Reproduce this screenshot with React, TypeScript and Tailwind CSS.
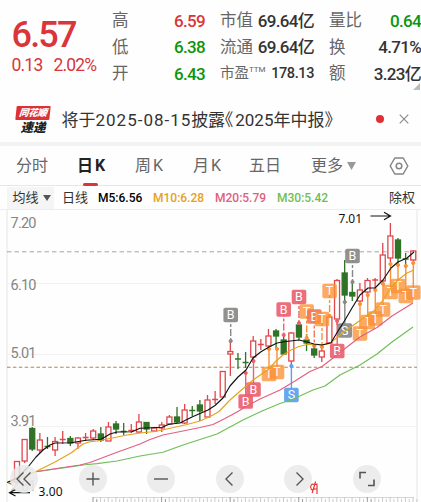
import { ReactNode } from "react";

const RED = "#e0474c";
const GREEN = "#2f7327";

// [high, bodyTop, bodyBottom, low, colour]
const candles: [number, number, number, number, string][] = [
    [461, 461.5, 482, 482, "r"],
    [439, 439.5, 461, 463, "r"],
    [427, 428.5, 449, 451, "g"],
    [433, 440, 450, 453, "r"],
    [437, 446, 447, 449, "g"],
    [437, 441.5, 450, 456, "r"],
    [431, 439, 440, 444, "r"],
    [436, 438.5, 443, 446, "g"],
    [437, 438, 443, 449, "r"],
    [433, 437, 438, 441, "r"],
    [429, 431, 438, 440, "r"],
    [427, 434, 440, 442, "g"],
    [422, 427, 441, 441, "r"],
    [421, 424, 429, 434, "g"],
    [423, 431, 432, 435, "g"],
    [424, 430, 431, 433, "r"],
    [414, 422, 432, 433, "r"],
    [422, 422.5, 429, 434, "g"],
    [427, 428, 431, 432, "r"],
    [422, 425, 428, 432, "r"],
    [415, 417, 424, 425, "r"],
    [407, 417, 422, 423, "g"],
    [404, 410, 423, 424, "r"],
    [406, 410, 411, 416, "g"],
    [400, 405, 411, 421, "g"],
    [395, 400, 417, 418, "r"],
    [391, 399, 400, 404, "r"],
    [371, 371.5, 397, 397, "r"],
    [341, 351.5, 354, 376, "r"],
    [353, 358, 360, 369, "g"],
    [352, 362, 363, 368, "g"],
    [336, 341, 357, 362, "r"],
    [339, 344, 345, 350, "r"],
    [329, 336, 346, 350, "r"],
    [329, 331, 336, 348, "g"],
    [335, 340, 354, 355, "g"],
    [332, 333, 361, 365, "r"],
    [321, 325, 337, 340, "g"],
    [334, 340, 343, 351, "g"],
    [345, 349, 355, 358, "g"],
    [347, 351, 357, 362, "r"],
    [316, 317, 343, 344, "r"],
    [279, 280.5, 319, 325, "r"],
    [260, 273, 295, 303, "g"],
    [282, 292.5, 296, 301, "g"],
    [283, 290, 301, 305, "r"],
    [278, 280.5, 292, 297, "r"],
    [278, 279, 281, 290, "r"],
    [243, 255, 281, 283, "r"],
    [223, 236, 258, 262, "r"],
    [238, 240, 258, 264, "g"],
    [253, 258.5, 259.5, 268, "g"],
    [250, 251, 260, 261, "r"],
];

const lines = [
    {
        color: "#6fbf56",
        points: "36,471.7 70,467 85,464.8 97,463.6 117,461 140,456 163,452.3 183,445 200,439.5 217,434 243,420 262,411 280,403.5 291,400 313,390 325,386 340,375 360,365 377,354 392,342 413,327",
    },
    {
        color: "#e0607f",
        points: "36,471.7 53,469 80,465 90,462.5 115,453 140,444 150,439.5 163,435 183,431 200,427.5 213,424.5 225,418.5 237,412 247,406 260,399 270,394.5 280,390 295,381 310,371.5 322,366.5 337,355 345,348.5 360,337 377,327.5 392,316 413,303",
    },
    {
        color: "#e5a21c",
        points: "8,482.5 36,471.5 55,462 71,453 83,444 90,441.7 97,441 110,438.5 127,435 140,433 155,431.5 167,429 187,424.5 200,421 213,415 219,411.5 230,400 238,393 253,380 269,369 276,361 283,355 291,350 299,346.5 307,344.5 314,344.5 322,345 330,343.5 337,337.5 345,331 360,320.5 375,310 383,300 391,288 398,280 407,273 414,270",
    },
    {
        color: "#111111",
        points: "7,482.5 17,478 22,473 28,467 36,457 43,450 50,445 55,443 71,442.7 86,440.3 101,439.3 105,437 110,434 117,432 132,431.7 140,428.2 162,427.2 169,424.2 180,423 192,417 200,413.5 208,410 215,405.5 223,398 230,386 238,377 246,370 253,358 261,351.7 269,347 277,343 284,341.7 299,340 307,342 314,344 322,345 331,342.7 338,331 345,320 352,308 360,295 368,288 375,288 383,280 391,268 398,262 407,258 414,252",
    },
];

// cx, cy, letter, fill, anchor y the stem points at
const badges: [number, number, string, string, number][] = [
    [230.7, 315, "B", "#888888", 341],
    [245.7, 401.5, "B", "#e9626f", 373],
    [253.5, 389.5, "B", "#e9626f", 361],
    [269, 374, "T", "#fb9135", 349],
    [277, 372, "T", "#fb9135", 349],
    [283.7, 309.5, "B", "#e9626f", 335],
    [291.4, 395, "S", "#5ba0ea", 366],
    [299, 297, "B", "#e9626f", 323],
    [306.7, 311.5, "T", "#fb9135", 338],
    [314.3, 316.5, "B", "#ee7a5c", 346],
    [322, 319, "T", "#fb9135", 347],
    [329.6, 291, "T", "#fb9135", 316],
    [337.2, 351, "B", "#e9626f", 321],
    [344.8, 330.5, "S", "#888888", 302],
    [352.5, 256, "B", "#888888", 282],
    [360, 333.5, "T", "#fb9135", 304],
    [367.7, 322, "T", "#fb9135", 295],
    [375.3, 318.5, "T", "#fb9135", 290],
    [383, 309.5, "T", "#fb9135", 284],
    [390.5, 292, "T", "#fb9135", 264],
    [398, 286, "T", "#fb9135", 265],
    [405.8, 296, "T", "#fb9135", 266],
    [413.3, 292.5, "T", "#fb9135", 263],
];

const ticks = Array.from({ length: 43 }, (_, i) => 93 + i * 7.62);

function Chart() {
    return (
        <svg width="421" height="292" viewBox="0 210 421 292" className="block">
            <path d="M7 210V502M417 210V502" stroke="#e6e6e6" fill="none" />
            <path d="M7 283.5H417M7 354.5H417M7 426.5H417" stroke="#f2f2f2" />
            <path d="M7 251.8H417" stroke="#a5a5a5" strokeDasharray="4.5 3" />
            <path d="M7 367.3H417" stroke="#bd8149" strokeDasharray="3.5 2.4" strokeWidth="1.1" />
            <path d="M93 497.5H414" stroke="#d5d5d5" />
            {ticks.map((x, i) => (
                <path key={i} d={`M${x} 497V502M${x + 3.8} 499V502`} stroke={i % 9 === 0 ? "#999" : "#ccc"} />
            ))}

            <g fontSize="14.5" fill="#858585" fontFamily="Roboto, 'Liberation Sans', sans-serif">
                <text x="10.5" y="227.5" textLength="26">7.20</text>
                <text x="10.5" y="289.5" textLength="26">6.10</text>
                <text x="10.5" y="357.5" textLength="26">5.01</text>
                <text x="10.5" y="426" textLength="26">3.91</text>
                <text x="10.5" y="491" textLength="26" fill="#bbb">2.81</text>
            </g>

            {candles.map(([high, top, bottom, low, c], i) => {
                const x = 17 + i * 7.62;
                const color = c === "r" ? RED : GREEN;
                const flat = bottom - top < 2.5;
                return (
                    <g key={i} stroke={color} strokeWidth="1.3">
                        <path d={`M${x} ${high}V${top}M${x} ${bottom}V${low}`} />
                        {flat ? (
                            <path d={`M${x} ${top}V${bottom}M${x - 3} ${(top + bottom) / 2}H${x + 3}`} />
                        ) : (
                            <rect x={x - 2.5} y={top} width="5" height={bottom - top} fill={c === "r" ? "#fff" : GREEN} />
                        )}
                    </g>
                );
            })}

            {badges.map(([x, y, , fill, to], i) => (
                <g key={i} stroke={fill} fill={fill}>
                    <path
                        d={`M${x} ${y}V${to}`}
                        strokeWidth="1.4"
                        strokeDasharray={to > y ? "7 2 3 2" : undefined}
                        fill="none"
                    />
                    <circle cx={x} cy={to} r="1.6" />
                </g>
            ))}

            {badges.map(([x, y, letter, fill], i) => (
                <g key={i}>
                    <rect x={x - 7.3} y={y - 7.3} width="14.6" height="14.6" rx="1.8" fill={fill} fillOpacity={letter === "T" ? 0.78 : 0.92} />
                    <text x={x} y={y + 4.4} textAnchor="middle" fontSize="12.5" fill="#fff" fontFamily="Roboto, sans-serif">
                        {letter}
                    </text>
                </g>
            ))}

            {lines.map((l) => (
                <polyline key={l.color} points={l.points} stroke={l.color} strokeWidth="1.15" fill="none" strokeLinejoin="round" />
            ))}

            <g fontFamily="'Noto Sans', sans-serif" fontSize="12" fill="#111">
                <text x="338.5" y="223" textLength="23.5">7.01</text>
                <text x="38.5" y="496" textLength="24">3.00</text>
            </g>
            <path d="M370.5 216H390M384 212.3L390.5 216L384 219.7" stroke="#111" strokeWidth="1.2" fill="none" />
            <path d="M30 492.7H10M15.5 489.5L9.5 492.7L15.5 496" stroke="#111" strokeWidth="1.2" fill="none" />
            <path d="M8 482.5L12 484.5" stroke="#6b6b2b" strokeWidth="1.2" />
            <path d="M314.5 484.5C311.5 483 310.6 485.5 310.7 487.5C311 490.5 313.5 490.5 314.8 488.5M317 483.5V494M315.6 481.5L312.2 493M313.5 484.3H317.5M314 489H317" stroke="#e03a35" strokeWidth="1.2" fill="none" />
        </svg>
    );
}

function RoundButton({ children }: { children: ReactNode }) {
    return (
        <button className="flex size-7 items-center justify-center rounded-full bg-[#e9e9e9]/85">
            <svg width="18" height="18" viewBox="0 0 18 18" fill="none" stroke="#555" strokeWidth="1.4">
                {children}
            </svg>
        </button>
    );
}

function Stat({ label, value, color = "text-[#333]" }: { label: ReactNode; value: string; color?: string }) {
    return (
        <div className="flex h-[26.5px] items-center justify-between whitespace-nowrap">
            <span className="text-[16.5px] text-[#666]">{label}</span>
            <span className={`text-[17px] font-medium tracking-[-0.7px] ${color}`}>{value}</span>
        </div>
    );
}

export default function App() {
    return (
        <div className="relative h-[502px] w-[421px] overflow-hidden bg-[#fefefe] font-[Roboto,'Noto_Sans_CJK_SC',sans-serif] leading-none">
            <div className="flex h-[96px] pt-[8px]">
                <div className="w-[112px] shrink-0 pl-[11.5px] pt-[9px] text-[#d9353a]">
                    <div className="text-[36px] font-medium leading-[36px] tracking-[-1.8px]">6.57</div>
                    <div className="mt-[3px] flex gap-[11px] whitespace-nowrap text-[17.5px] leading-[18px] tracking-[-0.8px]">
                        <span>0.13</span>
                        <span>2.02%</span>
                    </div>
                </div>
                <div className="w-[93px] shrink-0">
                    <Stat label="高" value="6.59" color="text-[#d9353a]" />
                    <Stat label="低" value="6.38" color="text-[#0b960b]" />
                    <Stat label="开" value="6.43" color="text-[#0b960b]" />
                </div>
                <div className="ml-[15px] w-[94px] shrink-0">
                    <Stat label="市值" value="69.64亿" />
                    <Stat label="流通" value="69.64亿" />
                    <div className="flex h-[26.5px] items-center justify-between whitespace-nowrap">
                        <span className="flex text-[14.5px] text-[#666]">
                            市盈<span className="-mt-px text-[8px]">TTM</span>
                        </span>
                        <span className="text-[14.5px] font-medium tracking-[-0.4px] text-[#333]">178.13</span>
                    </div>
                </div>
                <div className="ml-[15px] w-[92px] shrink-0">
                    <Stat label="量比" value="0.64" color="text-[#0b960b]" />
                    <Stat label="换" value="4.71%" />
                    <Stat label="额" value="3.23亿" />
                </div>
            </div>

            <div className="flex h-[46px] items-center pl-4">
                <div className="w-[34px] pt-[3px] font-black italic">
                    <div className="flex h-[14px] w-[34px] -skew-x-6 items-center justify-center rounded-[1px] bg-[#dc3236] text-[9.5px] tracking-[-0.3px] text-white">
                        同花顺
                    </div>
                    <div className="mt-[2px] text-center text-[12.5px] text-[#222]">速递</div>
                </div>
                <div className="ml-[11.5px] flex w-[310.5px] items-center whitespace-nowrap pt-[2px] text-[17px] text-[#333] [font-feature-settings:'halt']">
                    <span>将于</span>
                    <span className="tracking-[1px]">2025-08-15</span>
                    <span className="tracking-[-0.3px]">披露</span>
                    <span>《</span>
                    <span className="ml-[2px]">2025</span>
                    <span>年中报》</span>
                </div>
                <span className="ml-[4px] size-2 rounded-full bg-[#e02f35]" />
                <svg className="ml-[15px]" width="10" height="10" viewBox="0 0 10 10" stroke="#888" strokeWidth="1.1">
                    <path d="M.7.7L9.3 9.3M9.3.7L.7 9.3" />
                </svg>
            </div>
            <div className="h-1 bg-[#f3f3f3]" />

            <div className="flex h-10 items-center border-b border-[#e6e6e6] pl-4 text-[16px] text-[#666]">
                <span className="w-[61px]">分时</span>
                <span className="relative flex w-[58px] gap-[2px] font-bold text-[#222]">
                    日<span>K</span>
                    <span className="absolute left-[6px] top-[25px] h-[3px] w-[15px] rounded-full bg-[#d9353a]" />
                </span>
                <span className="flex w-[58px] gap-[2px]">周<span>K</span></span>
                <span className="flex w-[56px] gap-[2px]">月<span>K</span></span>
                <span className="w-[62px]">五日</span>
                <span className="flex w-[78px] items-center gap-1">
                    更多
                    <svg width="9" height="8" viewBox="0 0 9 8" fill="#999">
                        <path d="M0 0H9L4.5 8Z" />
                    </svg>
                </span>
                <svg width="20" height="20" viewBox="0 0 20 20" fill="none" stroke="#858585" strokeWidth="1.5">
                    <path d="M5.8 2H14.2L18.8 10L14.2 18H5.8L1.2 10Z" strokeLinejoin="round" />
                    <circle cx="10" cy="10" r="2.8" />
                </svg>
            </div>

            <div className="flex h-6 items-center border-b border-[#ededed] pl-[7px] text-[12px] text-[#333]">
                <span className="flex h-[22px] w-[47px] items-center gap-[4px] bg-[#f5f5f5] pl-[5.5px] text-[13px]">
                    均线
                    <svg width="8" height="6" viewBox="0 0 8 6" fill="#555">
                        <path d="M0 0H8L4 6Z" />
                    </svg>
                </span>
                <span className="ml-[8px] w-[36px] text-[13px]">日线</span>
                <span className="w-[55px] font-medium text-black">M5:6.56</span>
                <span className="w-[62px] font-medium text-[#e5a21c]">M10:6.28</span>
                <span className="w-[62px] font-medium text-[#e0607f]">M20:5.79</span>
                <span className="w-[112px] font-medium text-[#6fbf56]">M30:5.42</span>
                <span className="whitespace-nowrap text-[13px]">除权</span>
            </div>

            <Chart />

            <div className="absolute left-[10px] top-[465px] flex gap-[40.6px]">
                <RoundButton><path d="M8.5 2.5L2 9L8.5 15.5M15.5 2.5L9 9L15.5 15.5" /></RoundButton>
                <RoundButton><path d="M2.5 9H15.5M9 2.5V15.5" /></RoundButton>
                <RoundButton><path d="M2 9H16" /></RoundButton>
                <RoundButton><path d="M11.5 2.5L5 9L11.5 15.5" /></RoundButton>
                <RoundButton><path d="M7.5 2.5L14 9L7.5 15.5" /></RoundButton>
                <RoundButton><path d="M2 8.5V2.5H8M16 9.5V15.5H10" strokeWidth="1.6" /></RoundButton>
            </div>
            <svg className="absolute left-[413px] top-[83px]" width="8" height="8" viewBox="0 0 8 8">
                <path d="M7 0V7H0Z" fill="#bbb" />
            </svg>
        </div>
    );
}
